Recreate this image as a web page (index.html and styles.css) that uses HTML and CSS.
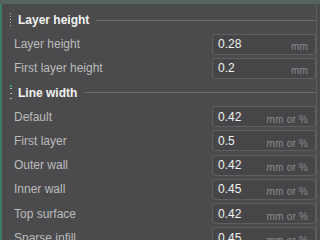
FILE: index.html
```html
<!DOCTYPE html>
<html lang="en">
<head>
    <meta charset="UTF-8">
    <meta name="viewport" content="width=device-width, initial-scale=1.0">
    <title>Quality settings</title>
    <link rel="stylesheet" href="styles.css">
</head>
<body>
    <div class="topbar"></div>
    <div class="panel">
        <section class="group">
            <div class="group-head">
                <span class="grip"></span>
                <span class="title">Layer height</span>
                <span class="rule"></span>
            </div>
            <div class="row">
                <span class="label">Layer height</span>
                <div class="field"><span class="val">0.28</span><span class="unit">mm</span></div>
            </div>
            <div class="row">
                <span class="label">First layer height</span>
                <div class="field"><span class="val">0.2</span><span class="unit">mm</span></div>
            </div>
        </section>

        <section class="group">
            <div class="group-head">
                <span class="grip active"></span>
                <span class="title">Line width</span>
                <span class="rule"></span>
            </div>
            <div class="row">
                <span class="label">Default</span>
                <div class="field"><span class="val">0.42</span><span class="unit">mm or %</span></div>
            </div>
            <div class="row">
                <span class="label">First layer</span>
                <div class="field"><span class="val">0.5</span><span class="unit">mm or %</span></div>
            </div>
            <div class="row">
                <span class="label">Outer wall</span>
                <div class="field"><span class="val">0.42</span><span class="unit">mm or %</span></div>
            </div>
            <div class="row">
                <span class="label">Inner wall</span>
                <div class="field"><span class="val">0.45</span><span class="unit">mm or %</span></div>
            </div>
            <div class="row">
                <span class="label">Top surface</span>
                <div class="field"><span class="val">0.42</span><span class="unit">mm or %</span></div>
            </div>
            <div class="row">
                <span class="label">Sparse infill</span>
                <div class="field"><span class="val">0.45</span><span class="unit">mm or %</span></div>
            </div>
        </section>
    </div>
</body>
</html>
```

FILE: styles.css
```css
html, body {
    margin: 0;
    height: 100%;
    overflow: hidden;
}
body {
    background-color: #4b4b4d;
    font-family: "Liberation Sans", Arial, sans-serif;
    font-size: 12px;
}
.topbar {
    height: 4px;
    background-color: #56645f;
}
.panel {
    width: 317px;
    box-sizing: border-box;
    padding-top: 4px;
    border-left: 2px solid #3b7d68;
    border-right: 1px solid #5e5e60;
    min-height: 236px;
}
.group-head {
    height: 24px;
    display: flex;
    align-items: center;
}
.grip {
    width: 1px;
    height: 15px;
    margin-left: 8px;
    margin-right: 7px;
    background: repeating-linear-gradient(to bottom, #b8b8b8 0 1px, transparent 1px 3px);
}
.grip.active {
    width: 2px;
    margin-right: 6px;
    background:
        linear-gradient(#2fa07c, #2fa07c) top / 2px 2px no-repeat,
        repeating-linear-gradient(to bottom, transparent 0 3px, #b8b8b8 3px 4px, transparent 4px 5px);
}
.title {
    color: #f2f2f2;
    font-weight: bold;
}
.rule {
    flex: 1;
    height: 1px;
    margin-left: 7px;
    background-color: #6a6a6c;
}
.row {
    height: 24.25px;
    display: flex;
    align-items: center;
    justify-content: space-between;
}
.label {
    margin-left: 12px;
    color: #bcbcbc;
}
.field {
    width: 104px;
    height: 21px;
    box-sizing: border-box;
    display: flex;
    align-items: center;
    justify-content: space-between;
    padding: 0 7px 0 5px;
    border: 1px solid #5f5f61;
    border-radius: 3px;
    background-color: #464648;
}
.val {
    color: #f0f0f0;
}
.unit {
    color: #8c8c8c;
    font-size: 10px;
    letter-spacing: 0.2px;
    margin-top: 5px;
}
```
